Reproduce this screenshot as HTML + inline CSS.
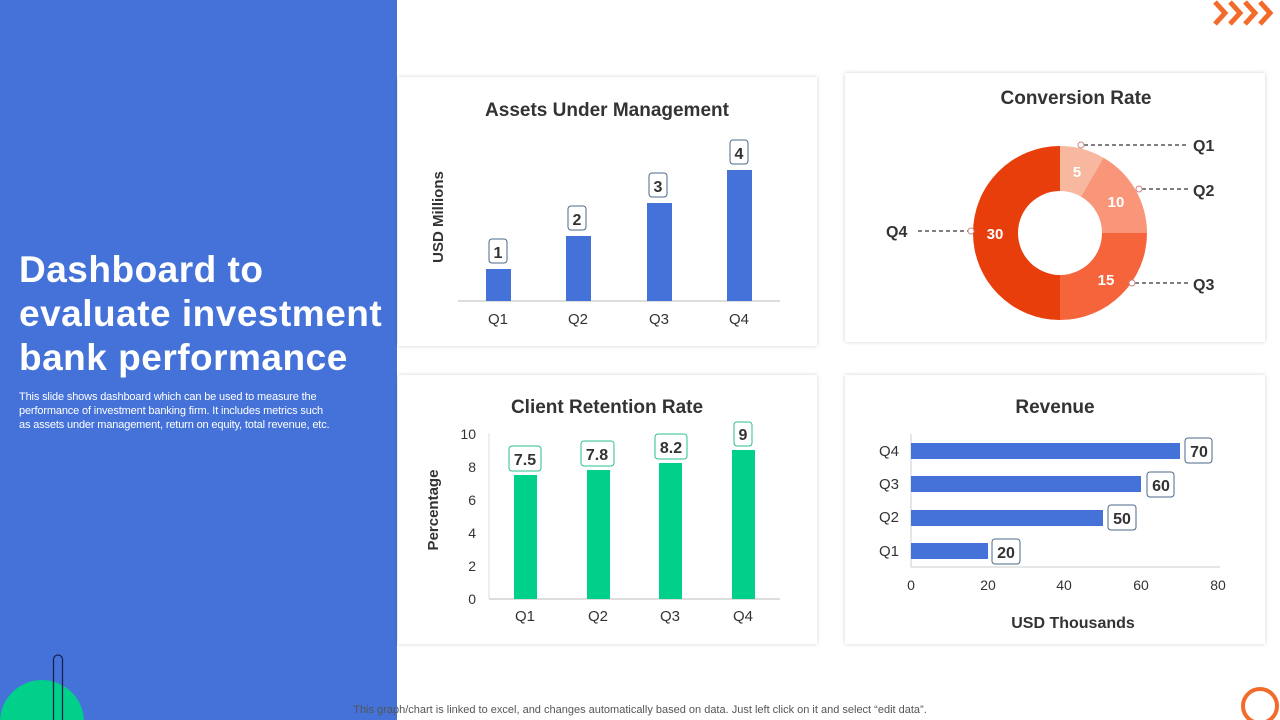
<!DOCTYPE html>
<html><head><meta charset="utf-8"><style>
html,body{margin:0;width:1280px;height:720px;overflow:hidden}
body{background:#fff;font-family:"Liberation Sans",sans-serif;position:relative}
.left{position:absolute;left:0;top:0;width:397px;height:720px;background:#4472d8}
h1{position:absolute;left:19px;top:248px;margin:0;color:#fff;font-size:37px;line-height:44px;font-weight:bold;letter-spacing:0.5px}
.desc{position:absolute;left:19px;top:390px;width:350px;color:#fff;font-size:11px;line-height:14px;letter-spacing:-0.15px}
.card{position:absolute;background:#fff;box-shadow:0 0 4px rgba(0,0,0,0.18)}
svg{overflow:hidden;display:block}
</style></head><body>
<div class="left"></div>
<h1>Dashboard to<br>evaluate investment<br>bank performance</h1>
<div class="desc">This slide shows dashboard which can be used to measure the<br>performance of investment banking firm. It includes metrics such<br>as assets under management, return on equity, total revenue, etc.</div>
<div class="card" style="left:398px;top:77px;width:419px;height:269px"></div>
<div class="card" style="left:845px;top:73px;width:420px;height:269px"></div>
<div class="card" style="left:398px;top:375px;width:419px;height:269px"></div>
<div class="card" style="left:845px;top:375px;width:420px;height:269px"></div>
<svg width="1280" height="720" style="position:absolute;left:0;top:0" font-family="Liberation Sans, sans-serif">
<circle cx="42" cy="722" r="42" fill="#00d08a"/>
<rect x="53.5" y="655" width="9" height="80" rx="4.5" fill="none" stroke="#1a2050" stroke-width="1.3"/>
<circle cx="1260" cy="706" r="17" fill="none" stroke="#f26b2a" stroke-width="4"/>
<g fill="none" stroke="#f26b2a" stroke-width="5">
<path d="M1215 2 L1225 13 L1215 24"/><path d="M1230 2 L1240 13 L1230 24"/><path d="M1245 2 L1255 13 L1245 24"/><path d="M1260 2 L1270 13 L1260 24"/>
</g>
<text x="640" y="713" font-size="11" fill="#555" text-anchor="middle">This graph/chart is linked to excel, and changes automatically based on data. Just left click on it and select “edit data”.</text>

<text x="607" y="116" font-size="19" font-weight="bold" fill="#333" text-anchor="middle">Assets Under Management</text>
<text transform="translate(443,217) rotate(-90)" font-size="15" font-weight="bold" fill="#333" text-anchor="middle">USD Millions</text>
<line x1="458" y1="301" x2="780" y2="301" stroke="#bbb"/>
<g fill="#4472d8"><rect x="486" y="269" width="25" height="32"/><rect x="566" y="236" width="25" height="65"/><rect x="647" y="203" width="25" height="98"/><rect x="727" y="170" width="25" height="131"/></g>
<g font-size="15" fill="#333" text-anchor="middle"><text x="498" y="324">Q1</text><text x="578" y="324">Q2</text><text x="659" y="324">Q3</text><text x="739" y="324">Q4</text></g>
<g fill="#fff" stroke="#4a6a8a" stroke-width="1">
<rect x="489" y="239" width="18" height="24" rx="3"/><rect x="568" y="206" width="18" height="24" rx="3"/><rect x="649" y="173" width="18" height="24" rx="3"/><rect x="730" y="140" width="18" height="24" rx="3"/>
</g>
<g font-size="16" font-weight="bold" fill="#333" text-anchor="middle"><text x="498" y="258">1</text><text x="577" y="225">2</text><text x="658" y="192">3</text><text x="739" y="159">4</text></g>

<text x="1076" y="104" font-size="19" font-weight="bold" fill="#333" text-anchor="middle">Conversion Rate</text>
<g transform="translate(1060,233)">
<path d="M0 -87 A87 87 0 0 1 43.5 -75.3 L21 -36.4 A42 42 0 0 0 0 -42Z" fill="#f8b8a0"/>
<path d="M43.5 -75.3 A87 87 0 0 1 87 0 L42 0 A42 42 0 0 0 21 -36.4Z" fill="#f9967a"/>
<path d="M87 0 A87 87 0 0 1 0 87 L0 42 A42 42 0 0 0 42 0Z" fill="#f5643a"/>
<path d="M0 87 A87 87 0 0 1 0 -87 L0 -42 A42 42 0 0 0 0 42Z" fill="#e83e0c"/>
</g>
<g font-size="15" font-weight="bold" fill="#fff" text-anchor="middle"><text x="1077" y="177">5</text><text x="1116" y="207">10</text><text x="1106" y="285">15</text><text x="995" y="239">30</text></g>
<g stroke="#333" stroke-dasharray="4,3" stroke-width="1.2"><line x1="1084" y1="145" x2="1188" y2="145"/><line x1="1142" y1="189" x2="1188" y2="189"/><line x1="1135" y1="283" x2="1188" y2="283"/><line x1="918" y1="231" x2="968" y2="231"/></g>
<g fill="#fff" stroke="#c88" stroke-width="1"><circle cx="1081" cy="145" r="3"/><circle cx="1139" cy="189" r="3"/><circle cx="1132" cy="283" r="3"/><circle cx="971" cy="231" r="3"/></g>
<g font-size="16" font-weight="bold" fill="#333"><text x="1193" y="151">Q1</text><text x="1193" y="196">Q2</text><text x="1193" y="290">Q3</text><text x="886" y="237">Q4</text></g>

<text x="607" y="413" font-size="19" font-weight="bold" fill="#333" text-anchor="middle">Client Retention Rate</text>
<text transform="translate(438,510) rotate(-90)" font-size="15" font-weight="bold" fill="#333" text-anchor="middle">Percentage</text>
<line x1="489" y1="599" x2="780" y2="599" stroke="#bbb"/><line x1="489" y1="433" x2="489" y2="599" stroke="#ddd"/>
<g font-size="14" fill="#333" text-anchor="end"><text x="476" y="604">0</text><text x="476" y="571">2</text><text x="476" y="538">4</text><text x="476" y="505">6</text><text x="476" y="472">8</text><text x="476" y="439">10</text></g>
<g fill="#00d08a"><rect x="514" y="475" width="23" height="124"/><rect x="587" y="470" width="23" height="129"/><rect x="659" y="463" width="23" height="136"/><rect x="732" y="450" width="23" height="149"/></g>
<g font-size="15" fill="#333" text-anchor="middle"><text x="525" y="621">Q1</text><text x="598" y="621">Q2</text><text x="670" y="621">Q3</text><text x="743" y="621">Q4</text></g>
<g fill="#fff" stroke="#2cbf8f" stroke-width="1"><rect x="509" y="446" width="32" height="25" rx="3"/><rect x="581" y="441" width="33" height="25" rx="3"/><rect x="655" y="434" width="32" height="25" rx="3"/><rect x="734" y="422" width="18" height="24" rx="3"/></g>
<g font-size="16" font-weight="bold" fill="#333" text-anchor="middle"><text x="525" y="465">7.5</text><text x="597" y="460">7.8</text><text x="671" y="453">8.2</text><text x="743" y="440">9</text></g>

<text x="1055" y="413" font-size="19" font-weight="bold" fill="#333" text-anchor="middle">Revenue</text>
<line x1="911" y1="567" x2="1220" y2="567" stroke="#ccc"/><line x1="911" y1="434" x2="911" y2="567" stroke="#ccc"/>
<g fill="#4472d8"><rect x="911" y="443" width="269" height="16"/><rect x="911" y="476" width="230" height="16"/><rect x="911" y="510" width="192" height="16"/><rect x="911" y="543" width="77" height="16"/></g>
<g font-size="15" fill="#333" text-anchor="end"><text x="899" y="456">Q4</text><text x="899" y="489">Q3</text><text x="899" y="522">Q2</text><text x="899" y="556">Q1</text></g>
<g font-size="14" fill="#333" text-anchor="middle"><text x="911" y="590">0</text><text x="988" y="590">20</text><text x="1064" y="590">40</text><text x="1141" y="590">60</text><text x="1218" y="590">80</text></g>
<text x="1073" y="628" font-size="16" font-weight="bold" fill="#333" text-anchor="middle">USD Thousands</text>
<g fill="#fff" stroke="#4a6a8a" stroke-width="1"><rect x="1185" y="438" width="27" height="25" rx="3"/><rect x="1147" y="472" width="27" height="25" rx="3"/><rect x="1108" y="505" width="28" height="25" rx="3"/><rect x="992" y="539" width="28" height="25" rx="3"/></g>
<g font-size="16" font-weight="bold" fill="#333" text-anchor="middle"><text x="1199" y="457">70</text><text x="1161" y="491">60</text><text x="1122" y="524">50</text><text x="1006" y="558">20</text></g>
</svg>
</body></html>
